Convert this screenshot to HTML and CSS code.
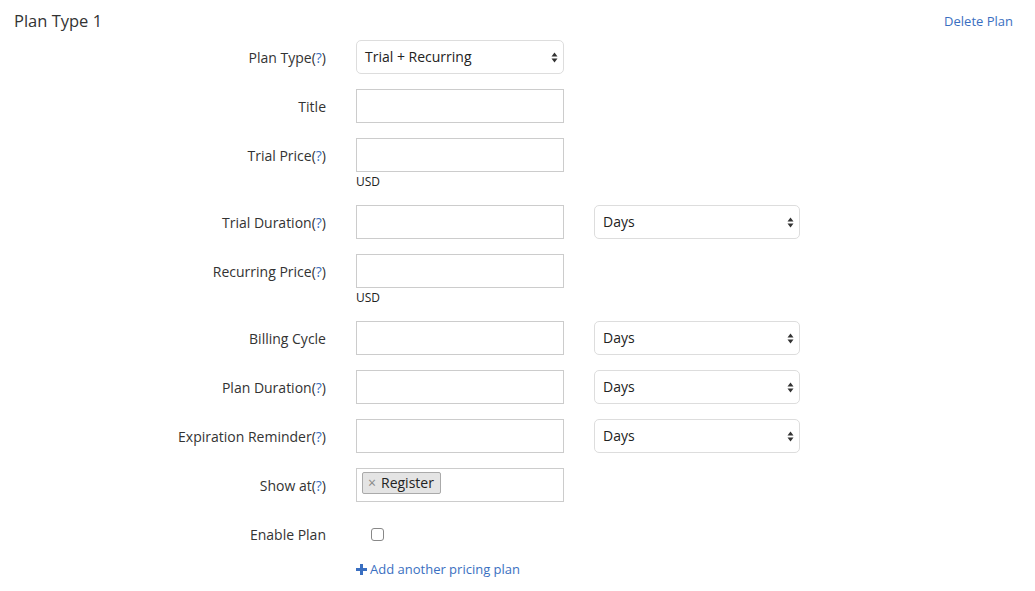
FILE: index.html
```html
<!DOCTYPE html>
<html>
<head>
<meta charset="utf-8">
<link rel="stylesheet" href="styles.css">
</head>
<body>
<div class="header">
  <div class="title">Plan Type 1</div>
  <a class="delete" href="#">Delete Plan</a>
</div>
<div class="form">
  <div class="row">
    <div class="label">Plan Type<span class="paren">(<span class="q">?</span>)</span></div>
    <div class="field"><div class="select"><span>Trial + Recurring</span><svg class="arrows" width="7" height="11" viewBox="0 0 7 11"><path d="M3.5 0.5L6.5 4.5H0.5Z M3.5 10.5L0.5 6.5H6.5Z" fill="#333"/></svg></div></div>
  </div>
  <div class="row">
    <div class="label">Title</div>
    <div class="field"><div class="input"></div></div>
  </div>
  <div class="row">
    <div class="label">Trial Price<span class="paren">(<span class="q">?</span>)</span></div>
    <div class="field"><div class="input"></div><div class="unit">USD</div></div>
  </div>
  <div class="row">
    <div class="label">Trial Duration<span class="paren">(<span class="q">?</span>)</span></div>
    <div class="field"><div class="input"></div></div>
    <div class="field"><div class="select wide"><span>Days</span><svg class="arrows" width="7" height="11" viewBox="0 0 7 11"><path d="M3.5 0.5L6.5 4.5H0.5Z M3.5 10.5L0.5 6.5H6.5Z" fill="#333"/></svg></div></div>
  </div>
  <div class="row">
    <div class="label">Recurring Price<span class="paren">(<span class="q">?</span>)</span></div>
    <div class="field"><div class="input"></div><div class="unit">USD</div></div>
  </div>
  <div class="row">
    <div class="label">Billing Cycle</div>
    <div class="field"><div class="input"></div></div>
    <div class="field"><div class="select wide"><span>Days</span><svg class="arrows" width="7" height="11" viewBox="0 0 7 11"><path d="M3.5 0.5L6.5 4.5H0.5Z M3.5 10.5L0.5 6.5H6.5Z" fill="#333"/></svg></div></div>
  </div>
  <div class="row">
    <div class="label">Plan Duration<span class="paren">(<span class="q">?</span>)</span></div>
    <div class="field"><div class="input"></div></div>
    <div class="field"><div class="select wide"><span>Days</span><svg class="arrows" width="7" height="11" viewBox="0 0 7 11"><path d="M3.5 0.5L6.5 4.5H0.5Z M3.5 10.5L0.5 6.5H6.5Z" fill="#333"/></svg></div></div>
  </div>
  <div class="row">
    <div class="label">Expiration Reminder<span class="paren">(<span class="q">?</span>)</span></div>
    <div class="field"><div class="input"></div></div>
    <div class="field"><div class="select wide"><span>Days</span><svg class="arrows" width="7" height="11" viewBox="0 0 7 11"><path d="M3.5 0.5L6.5 4.5H0.5Z M3.5 10.5L0.5 6.5H6.5Z" fill="#333"/></svg></div></div>
  </div>
  <div class="row">
    <div class="label">Show at<span class="paren">(<span class="q">?</span>)</span></div>
    <div class="field"><div class="input tags"><span class="tag"><span class="x">×</span>Register</span></div></div>
  </div>
  <div class="row">
    <div class="label">Enable Plan</div>
    <div class="field check-field"><span class="checkbox"></span></div>
  </div>
  <div class="row add-row">
    <div></div>
    <div class="field add-field"><a class="add" href="#"><svg class="plus" width="11" height="11" viewBox="0 0 11 11"><path d="M4 0H7V4H11V7H7V11H4V7H0V4H4Z" fill="#3a6fc1"/></svg>Add another pricing plan</a></div>
  </div>
</div>
</body>
</html>
```
FILE: styles.css
```css
* { box-sizing: border-box; }
body {
  margin: 0;
  font-family: "Open Sans", "DejaVu Sans", sans-serif;
  font-size: 14px;
  color: #333;
  background: #fff;
}
a { text-decoration: none; }
.header {
  display: flex;
  justify-content: space-between;
  align-items: center;
  padding: 10px 22px 0 14px;
  height: 32px;
}
.title {
  font-size: 16.5px;
  line-height: 22px;
  color: #333;
}
.delete {
  font-size: 13px;
  color: #3a6fc1;
  line-height: 22px;
}
.form {
  margin-top: 8px;
  display: flex;
  flex-direction: column;
  gap: 15px;
}
.row {
  display: grid;
  grid-template-columns: 326px 208px 206px;
  column-gap: 30px;
  align-items: start;
}
.label {
  text-align: right;
  line-height: 34px;
  height: 34px;
  padding-top: 1px;
  white-space: nowrap;
}
.q { color: #3a6fc1; }
.field { display: flex; flex-direction: column; }
.input {
  height: 34px;
  border: 1px solid #ccc;
  background: #fff;
}
.unit {
  font-size: 12px;
  line-height: 17px;
  margin-top: 1px;
  color: #222;
}
.select {
  position: relative;
  height: 34px;
  border: 1px solid #ddd;
  border-radius: 5px;
  padding: 0 8px;
  line-height: 32px;
  color: #222;
  background: #fff;
}
.arrows {
  position: absolute;
  right: 5px;
  top: 11px;
}
.tags {
  padding: 3px 0 0 5px;
}
.tag {
  display: inline-flex;
  align-items: center;
  height: 22px;
  padding: 0 6px 0 5px;
  background: #e4e4e4;
  border: 1px solid #aaa;
  border-radius: 2px;
  line-height: 20px;
  color: #222;
}
.x {
  color: #888;
  margin-right: 5px;
  font-size: 14px;
}
.check-field {
  height: 34px;
  justify-content: center;
  padding-left: 15px;
}
.checkbox {
  display: block;
  width: 13px;
  height: 13px;
  border: 1px solid #888;
  border-radius: 3px;
  background: #fff;
}
.add-row { margin-top: -6px; }
.add-field { grid-column: 2 / 4; }
.add {
  display: inline-flex;
  align-items: center;
  font-size: 13px;
  line-height: 18px;
  color: #3a6fc1;
}
.plus { margin-right: 3px; }
```
